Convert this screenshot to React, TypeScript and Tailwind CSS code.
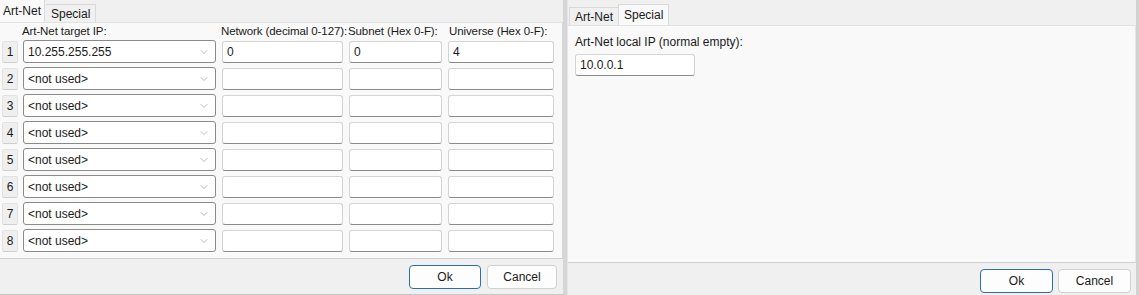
import { ChevronDown } from 'lucide-react';

const font = { fontFamily: '"Liberation Sans", "Noto Sans", sans-serif' };

function TextBox({ value = '', className = '' }: { value?: string; className?: string }) {
  return (
    <div
      className={`h-[22px] bg-white border border-[#d4d4d4] border-b-[#8a8a8a] rounded-[3px] px-[4px] flex items-center text-[12px] text-[#1a1a1a] ${className}`}
    >
      {value}
    </div>
  );
}

function Combo({ value }: { value: string }) {
  return (
    <div className="w-[193px] h-[23px] bg-white border border-[#8a8a8a] rounded-[3px] px-[4px] flex items-center justify-between text-[12px] text-[#1a1a1a]">
      <span>{value}</span>
      <ChevronDown className="w-[12px] h-[12px] text-[#8a8a8a] mr-[1px]" strokeWidth={1.2} />
    </div>
  );
}

function Button({ label, primary }: { label: string; primary?: boolean }) {
  return (
    <div
      className={`h-[24px] flex items-center justify-center rounded-[4px] text-[12px] text-[#1a1a1a] ${
        primary ? 'border border-[#2b6fb0] bg-[#fdfdfd]' : 'border border-[#d0d0d0] bg-[#fdfdfd]'
      }`}
    >
      {label}
    </div>
  );
}

const rows = [1, 2, 3, 4, 5, 6, 7, 8];

function LeftPanel() {
  return (
    <div className="w-[563px] h-[295px] flex flex-col bg-[#f0f0f0] border-b border-[#c8c8c8]">
      {/* tabs */}
      <div className="h-[22px] flex items-end text-[12px] text-[#1a1a1a] bg-[#f0f0f0]">
        <div className="h-[22px] px-[3px] flex items-center bg-[#f9f9f9] border-r border-[#d9d9d9]">Art-Net</div>
        <div className="h-[18px] px-[5px] flex items-center bg-[#f0f0f0] border-t border-r border-[#d9d9d9] ml-[1px]">
          Special
        </div>
      </div>
      {/* content */}
      <div className="h-[236px] bg-[#f9f9f9] border-t border-[#e2e2e2] border-r border-r-[#d9d9d9] pt-[2px]">
        <div className="flex text-[11.5px] text-[#1a1a1a] h-[14px] items-center whitespace-nowrap tracking-[-0.1px]">
          <span className="ml-[22px] w-[199px]">Art-Net target IP:</span>
          <span className="w-[127px]">Network (decimal 0-127):</span>
          <span className="w-[101px]">Subnet (Hex 0-F):</span>
          <span>Universe (Hex 0-F):</span>
        </div>
        <div className="flex flex-col gap-[4px] mt-[1px]">
          {rows.map((n) => (
            <div key={n} className="flex items-center h-[23px]">
              <div className="ml-[2px] w-[16px] h-[22px] flex items-center justify-center bg-[#efefef] border border-[#e2e2e2] border-b-[#cfcfcf] rounded-[2px] text-[12px] text-[#1a1a1a]">
                {n}
              </div>
              <div className="ml-[5px]">
                <Combo value={n === 1 ? '10.255.255.255' : '<not used>'} />
              </div>
              <TextBox className="ml-[6px] w-[121px]" value={n === 1 ? '0' : ''} />
              <TextBox className="ml-[6px] w-[93px]" value={n === 1 ? '0' : ''} />
              <TextBox className="ml-[6px] w-[106px]" value={n === 1 ? '4' : ''} />
            </div>
          ))}
        </div>
      </div>
      {/* footer */}
      <div className="flex-1 border-t border-[#cfcfcf] flex items-start justify-end pt-[6px] pr-[6px] gap-[6px]">
        <div className="w-[72px]">
          <Button label="Ok" primary />
        </div>
        <div className="w-[70px]">
          <Button label="Cancel" />
        </div>
      </div>
    </div>
  );
}

function RightPanel() {
  return (
    <div className="flex-1 h-[295px] flex flex-col bg-[#f0f0f0] border-l border-[#e6e6e6] border-r-[3px] border-r-[#d2d2d2]">
      <div className="h-[25px] flex items-end text-[12px] text-[#1a1a1a] pl-[1px]">
        <div className="h-[18px] px-[5px] flex items-center bg-[#f0f0f0] border-t border-l border-[#d9d9d9]">Art-Net</div>
        <div className="h-[21px] px-[5px] flex items-center bg-[#f9f9f9] border-t border-l border-r border-[#d9d9d9]">
          Special
        </div>
      </div>
      <div className="h-[237px] bg-[#f9f9f9] border-t border-[#e2e2e2] border-r border-r-[#e6e6e6] pl-[7px] pt-[8px]">
        <div className="text-[12px] text-[#1a1a1a] h-[16px] flex items-center">Art-Net local IP (normal empty):</div>
        <TextBox className="mt-[4px] w-[120px]" value="10.0.0.1" />
      </div>
      <div className="flex-1 border-t border-[#cfcfcf] flex items-start justify-end pt-[6px] pr-[5px] gap-[5px]">
        <div className="w-[73px]">
          <Button label="Ok" primary />
        </div>
        <div className="w-[73px]">
          <Button label="Cancel" />
        </div>
      </div>
    </div>
  );
}

export default function App() {
  return (
    <div className="w-[1139px] h-[295px] flex bg-[#dadada] overflow-hidden" style={font}>
      <LeftPanel />
      <div className="w-[4px] bg-[#d6d6d6]" />
      <RightPanel />
    </div>
  );
}
